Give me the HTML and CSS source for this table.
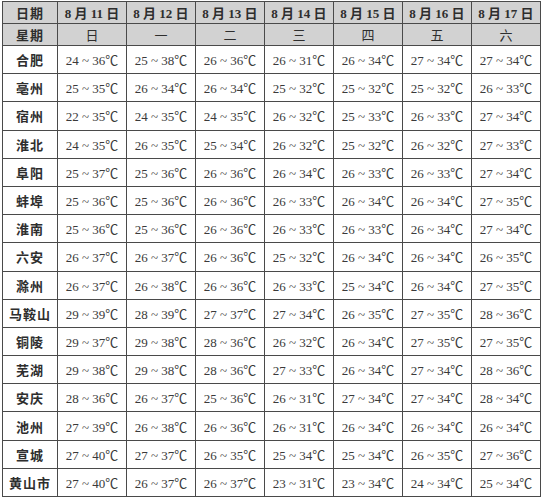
FILE: index.html
```html
<!DOCTYPE html>
<html lang="zh-CN">
<head>
<meta charset="utf-8">
<link rel="stylesheet" href="styles.css">
</head>
<body>
<table class="weather">
  <colgroup>
    <col class="c-city">
    <col class="c-day"><col class="c-day"><col class="c-day"><col class="c-day"><col class="c-day"><col class="c-day"><col class="c-day">
  </colgroup>
  <thead>
    <tr class="hd">
      <th class="city">日期</th>
      <th>8 月 11 日</th><th>8 月 12 日</th><th>8 月 13 日</th><th>8 月 14 日</th><th>8 月 15 日</th><th>8 月 16 日</th><th>8 月 17 日</th>
    </tr>
    <tr class="hd wk">
      <th class="city">星期</th>
      <th>日</th><th>一</th><th>二</th><th>三</th><th>四</th><th>五</th><th>六</th>
    </tr>
  </thead>
  <tbody>
    <tr><th class="city">合肥</th><td>24 ~ 36℃</td><td>25 ~ 38℃</td><td>26 ~ 36℃</td><td>26 ~ 31℃</td><td>26 ~ 34℃</td><td>27 ~ 34℃</td><td>27 ~ 34℃</td></tr>
    <tr><th class="city">亳州</th><td>25 ~ 35℃</td><td>26 ~ 34℃</td><td>26 ~ 34℃</td><td>25 ~ 32℃</td><td>25 ~ 32℃</td><td>25 ~ 32℃</td><td>26 ~ 33℃</td></tr>
    <tr><th class="city">宿州</th><td>22 ~ 35℃</td><td>24 ~ 35℃</td><td>24 ~ 35℃</td><td>26 ~ 32℃</td><td>25 ~ 33℃</td><td>26 ~ 33℃</td><td>27 ~ 34℃</td></tr>
    <tr><th class="city">淮北</th><td>24 ~ 35℃</td><td>26 ~ 35℃</td><td>25 ~ 34℃</td><td>26 ~ 32℃</td><td>25 ~ 32℃</td><td>26 ~ 32℃</td><td>27 ~ 33℃</td></tr>
    <tr><th class="city">阜阳</th><td>25 ~ 37℃</td><td>25 ~ 36℃</td><td>26 ~ 36℃</td><td>26 ~ 34℃</td><td>26 ~ 33℃</td><td>26 ~ 33℃</td><td>27 ~ 34℃</td></tr>
    <tr><th class="city">蚌埠</th><td>25 ~ 36℃</td><td>25 ~ 36℃</td><td>26 ~ 36℃</td><td>26 ~ 33℃</td><td>26 ~ 34℃</td><td>26 ~ 34℃</td><td>27 ~ 35℃</td></tr>
    <tr><th class="city">淮南</th><td>25 ~ 36℃</td><td>25 ~ 36℃</td><td>26 ~ 36℃</td><td>26 ~ 33℃</td><td>26 ~ 33℃</td><td>26 ~ 34℃</td><td>27 ~ 34℃</td></tr>
    <tr><th class="city">六安</th><td>26 ~ 37℃</td><td>26 ~ 37℃</td><td>26 ~ 36℃</td><td>25 ~ 32℃</td><td>26 ~ 34℃</td><td>26 ~ 34℃</td><td>26 ~ 35℃</td></tr>
    <tr><th class="city">滁州</th><td>26 ~ 37℃</td><td>26 ~ 38℃</td><td>26 ~ 36℃</td><td>26 ~ 33℃</td><td>25 ~ 34℃</td><td>26 ~ 34℃</td><td>27 ~ 35℃</td></tr>
    <tr><th class="city">马鞍山</th><td>29 ~ 39℃</td><td>28 ~ 39℃</td><td>27 ~ 37℃</td><td>27 ~ 34℃</td><td>26 ~ 35℃</td><td>27 ~ 35℃</td><td>28 ~ 36℃</td></tr>
    <tr><th class="city">铜陵</th><td>29 ~ 37℃</td><td>29 ~ 38℃</td><td>28 ~ 36℃</td><td>26 ~ 32℃</td><td>26 ~ 34℃</td><td>27 ~ 35℃</td><td>27 ~ 35℃</td></tr>
    <tr><th class="city">芜湖</th><td>29 ~ 38℃</td><td>29 ~ 38℃</td><td>28 ~ 36℃</td><td>27 ~ 33℃</td><td>26 ~ 34℃</td><td>27 ~ 34℃</td><td>28 ~ 36℃</td></tr>
    <tr><th class="city">安庆</th><td>28 ~ 36℃</td><td>26 ~ 37℃</td><td>25 ~ 36℃</td><td>26 ~ 31℃</td><td>27 ~ 34℃</td><td>27 ~ 34℃</td><td>28 ~ 34℃</td></tr>
    <tr><th class="city">池州</th><td>27 ~ 39℃</td><td>26 ~ 38℃</td><td>26 ~ 36℃</td><td>26 ~ 31℃</td><td>26 ~ 34℃</td><td>26 ~ 34℃</td><td>26 ~ 34℃</td></tr>
    <tr><th class="city">宣城</th><td>27 ~ 40℃</td><td>27 ~ 37℃</td><td>26 ~ 35℃</td><td>25 ~ 34℃</td><td>25 ~ 34℃</td><td>26 ~ 35℃</td><td>27 ~ 36℃</td></tr>
    <tr><th class="city">黄山市</th><td>27 ~ 40℃</td><td>26 ~ 37℃</td><td>26 ~ 37℃</td><td>23 ~ 31℃</td><td>23 ~ 34℃</td><td>24 ~ 34℃</td><td>25 ~ 34℃</td></tr>
  </tbody>
</table>
</body>
</html>
```

FILE: styles.css
```css
html, body {
  margin: 0;
  padding: 0;
  background: #ffffff;
}

body {
  padding: 1px 0 0 2px;
}

.weather {
  border-collapse: collapse;
  table-layout: fixed;
  width: 539px;
  font-family: "Liberation Serif", "Noto Sans CJK SC", serif;
  font-size: 13px;
  color: #3a3a3a;
}

.c-city { width: 55px; }
.c-day { width: 69px; }

.weather th,
.weather td {
  border: 1px solid #4a4a4a;
  padding: 0;
  text-align: center;
  vertical-align: middle;
  white-space: nowrap;
}

.weather .hd th {
  background: #d2d2d2;
  height: 21px;
  font-weight: bold;
  color: #2e2e2e;
}

.weather .wk th {
  font-weight: normal;
}

.weather .wk th.city,
.weather th.city {
  font-weight: bold;
  letter-spacing: 1px;
}

.weather tbody tr {
  height: 28.2px;
}

.weather tbody th.city {
  background: #ffffff;
  color: #2e2e2e;
}
```
